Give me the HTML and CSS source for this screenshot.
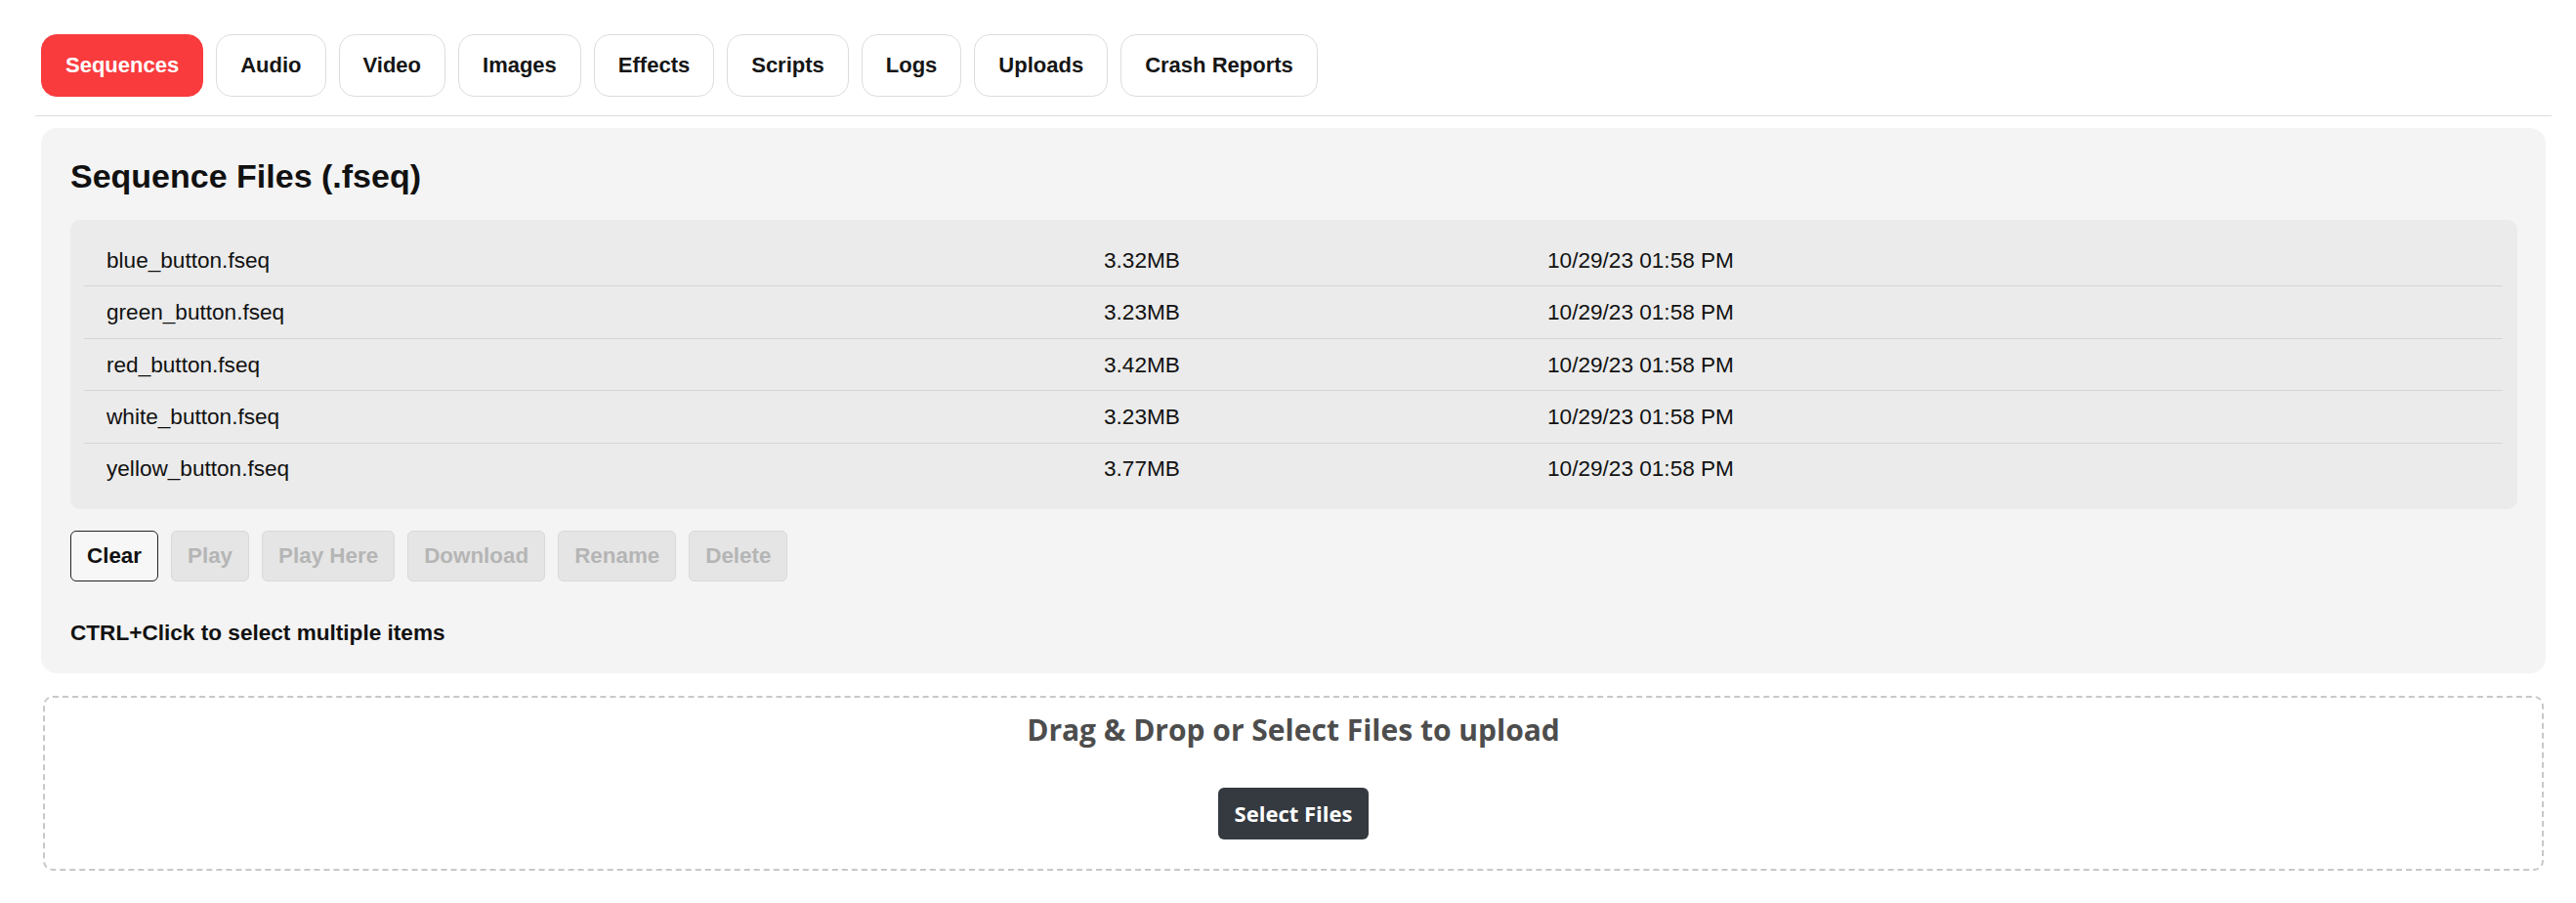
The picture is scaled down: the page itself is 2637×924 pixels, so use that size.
FILE: index.html
```html
<!DOCTYPE html>
<html lang="en">
<head>
<meta charset="utf-8">
<title>Files</title>
<link rel="stylesheet" href="styles.css">
</head>
<body>
<div class="page">
  <nav class="tabs">
    <button class="tab active">Sequences</button>
    <button class="tab">Audio</button>
    <button class="tab">Video</button>
    <button class="tab">Images</button>
    <button class="tab">Effects</button>
    <button class="tab">Scripts</button>
    <button class="tab">Logs</button>
    <button class="tab">Uploads</button>
    <button class="tab">Crash Reports</button>
  </nav>

  <section class="panel">
    <h2 class="panel-title">Sequence Files (.fseq)</h2>
    <div class="file-table">
      <div class="file-row"><span>blue_button.fseq</span><span>3.32MB</span><span>10/29/23 01:58 PM</span></div>
      <div class="file-row"><span>green_button.fseq</span><span>3.23MB</span><span>10/29/23 01:58 PM</span></div>
      <div class="file-row"><span>red_button.fseq</span><span>3.42MB</span><span>10/29/23 01:58 PM</span></div>
      <div class="file-row"><span>white_button.fseq</span><span>3.23MB</span><span>10/29/23 01:58 PM</span></div>
      <div class="file-row"><span>yellow_button.fseq</span><span>3.77MB</span><span>10/29/23 01:58 PM</span></div>
    </div>
    <div class="actions">
      <button class="btn">Clear</button>
      <button class="btn" disabled>Play</button>
      <button class="btn" disabled>Play Here</button>
      <button class="btn" disabled>Download</button>
      <button class="btn" disabled>Rename</button>
      <button class="btn" disabled>Delete</button>
    </div>
    <p class="hint">CTRL+Click to select multiple items</p>
  </section>

  <section class="dropzone">
    <h3 class="drop-title">Drag &amp; Drop or Select Files to upload</h3>
    <button class="select-btn">Select Files</button>
  </section>
</div>
</body>
</html>
```

FILE: styles.css
```css
html, body {
  margin: 0;
  padding: 0;
  background: #ffffff;
}

body {
  font-family: "Liberation Sans", Arial, sans-serif;
  color: #111111;
}

.page {
  margin: 0 25px 0 36px;
}

.tabs {
  display: flex;
  gap: 13px;
  padding: 35px 6px 19px;
  border-bottom: 1px solid #dddddd;
}

.tab {
  font-family: "Liberation Sans", Arial, sans-serif;
  font-weight: bold;
  font-size: 22px;
  line-height: 26px;
  padding: 18px 24px;
  border: 1px solid #dddddd;
  border-radius: 16px;
  background: #ffffff;
  color: #151515;
  cursor: pointer;
}

.tab.active {
  background: #f93b3e;
  border-color: #f93b3e;
  color: #ffffff;
}

.panel {
  margin: 12px 6px 0;
  background: #f4f4f4;
  border-radius: 16px;
  padding: 30px 29px 28px 30px;
}

.panel-title {
  margin: 0 0 25px;
  font-size: 34px;
  line-height: 39px;
  font-weight: bold;
  color: #111111;
}

.file-table {
  background: #ebebeb;
  border-radius: 10px;
  padding: 15px 15px 15px 14px;
}

.file-row {
  display: grid;
  grid-template-columns: 1021px 454px 1fr;
  font-size: 22.6px;
  line-height: 26px;
  padding: 13.8px 0 12.6px;
  border-bottom: 1px solid #d5d5d5;
}

.file-row:last-child {
  border-bottom: none;
}

.file-row span {
  padding-left: 23px;
}

.actions {
  display: flex;
  gap: 13px;
  margin-top: 22px;
}

.btn {
  font-family: "Liberation Sans", Arial, sans-serif;
  font-weight: bold;
  font-size: 22.4px;
  line-height: 26px;
  padding: 12px 16px;
  border: 1px solid #222222;
  border-radius: 6px;
  background: #f7f7f7;
  color: #111111;
}

.btn:disabled {
  background: #e5e5e5;
  border-color: #d9d9d9;
  color: #b5b5b5;
}

.hint {
  margin: 40px 0 0;
  font-size: 22.6px;
  line-height: 26px;
  font-weight: bold;
}

.dropzone {
  margin: 23px 8px 32px;
  border: 2px dashed #c8c8c8;
  border-radius: 10px;
  padding: 13px 0 30px;
  text-align: center;
}

.drop-title {
  margin: 0 0 39px;
  font-family: "Open Sans", sans-serif;
  font-weight: bold;
  font-size: 30px;
  line-height: 40px;
  color: #4d4d4d;
}

.select-btn {
  font-family: "Open Sans", sans-serif;
  font-weight: bold;
  font-size: 22px;
  line-height: 31px;
  padding: 11px 17px;
  border: none;
  border-radius: 6px;
  background: #343a40;
  color: #ffffff;
}
```
